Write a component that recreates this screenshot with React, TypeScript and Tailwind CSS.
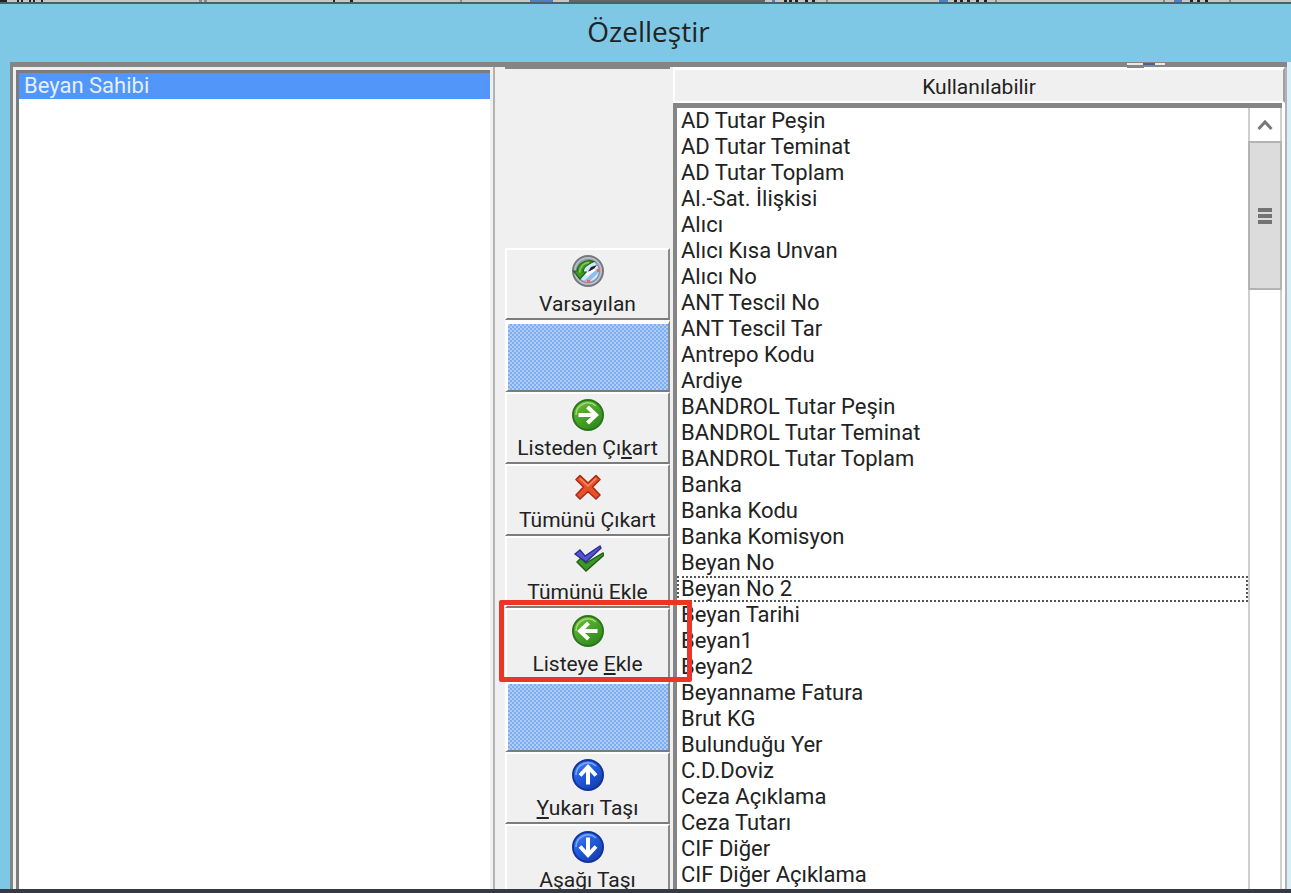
import React, { useState } from 'react'
import clsx from 'clsx'

const availableFields = [
  'AD Tutar Peşin',
  'AD Tutar Teminat',
  'AD Tutar Toplam',
  'Al.-Sat. İlişkisi',
  'Alıcı',
  'Alıcı Kısa Unvan',
  'Alıcı No',
  'ANT Tescil No',
  'ANT Tescil Tar',
  'Antrepo Kodu',
  'Ardiye',
  'BANDROL Tutar Peşin',
  'BANDROL Tutar Teminat',
  'BANDROL Tutar Toplam',
  'Banka',
  'Banka Kodu',
  'Banka Komisyon',
  'Beyan No',
  'Beyan No 2',
  'Beyan Tarihi',
  'Beyan1',
  'Beyan2',
  'Beyanname Fatura',
  'Brut KG',
  'Bulunduğu Yer',
  'C.D.Doviz',
  'Ceza Açıklama',
  'Ceza Tutarı',
  'CIF Diğer',
  'CIF Diğer Açıklama',
]

const ResetIcon = () => (
  <svg width="32" height="32" viewBox="0 0 32 32" aria-hidden="true">
    <circle cx="16" cy="16" r="15" fill="#b9bfce" stroke="#77797e" strokeWidth="2" />
    <circle cx="16" cy="16" r="11.5" fill="#d6e6fa" stroke="#8d93a3" strokeWidth="1.5" />
    <path d="M12 26 26 13l1 4-10 10z" fill="#8dbcf4" />
    <path d="M16 16.500 19 12l6-2-4 5z" fill="#20242c" />
    <path d="M23 14.500 14 20" stroke="#fff" strokeWidth="2.5" />
    <path d="M22 6.500C14 4 6 8 5 16H1.500L8 24l6-7h-3c0-5 5-8 11-10.500z" fill="#3c9a25" stroke="#20670f" strokeWidth="1.2" />
    <path d="M17 7.500c-5 0-9 4-9.500 10" stroke="#79c85b" strokeWidth="1.8" fill="none" />
    <rect x="25" y="14" width="3" height="3" fill="#ee6a50" />
    <rect x="15" y="25" width="3" height="3" fill="#ee6a50" />
  </svg>
)

const arrowTurns = { right: 0, down: 90, left: 180, up: 270 }

const ArrowIcon = ({ direction, color }: { direction: keyof typeof arrowTurns; color: 'green' | 'blue' }) => {
  const green = color === 'green'
  const id = `ball-${color}-${direction}`
  return (
    <svg width="32" height="32" viewBox="0 0 32 32" aria-hidden="true">
      <defs>
        <linearGradient id={id} x1="0" y1="0" x2="0.7" y2="1">
          <stop offset="0" stopColor={green ? '#74c23f' : '#4c86f6'} />
          <stop offset="0.5" stopColor={green ? '#4da52b' : '#245be0'} />
          <stop offset="1" stopColor={green ? '#2f8a1c' : '#143fae'} />
        </linearGradient>
      </defs>
      <circle cx="16" cy="16" r="15" fill={`url(#${id})`} stroke={green ? '#2c741c' : '#12339a'} strokeWidth="2" />
      <path d="M4 16a12 12 0 0 1 20-9" fill="none" stroke={green ? '#9cdc72' : '#7da8ff'} strokeWidth="1.5" />
      <g transform={`rotate(${arrowTurns[direction]} 16 16)`} fill="none" stroke="#fff" strokeWidth="4">
        <path d="M6.500 16H24" />
        <path d="M15.500 8l8.500 8-8.500 8" />
      </g>
    </svg>
  )
}

const CrossIcon = () => (
  <svg width="32" height="32" viewBox="0 0 32 32" aria-hidden="true">
    <path
      d="M8 4.500 16 12l8-7.500 4 4L20.500 16l7.500 8-4 4-8-7.500L8 28l-4-4 7.500-8L4 8.500z"
      fill="#ea4f2b"
      stroke="#a92c14"
      strokeWidth="1.6"
      strokeLinejoin="round"
    />
    <path d="M8 7.500l8 7.500 8-7.500" fill="none" stroke="#f58c68" strokeWidth="1.6" />
  </svg>
)

const ChecksIcon = () => (
  <svg width="32" height="32" viewBox="0 0 32 32" aria-hidden="true">
    <path d="M5 19l4-4 5 5L31 10l1 2-18 16z" fill="#3d962a" stroke="#1f5f14" strokeWidth="1.4" />
    <path d="M3 11l5-4 5 6L28 3l1 2-15 14z" fill="#5557cf" stroke="#2b2c94" strokeWidth="1.4" />
  </svg>
)

const DitheredSlot = () => (
  <div className="h-[72px] shrink-0 border-2 border-t-4 border-l-3 border-white border-r-[#8a8a8a] border-b-[#7c7c7c]">
    <div className="h-full bg-[repeating-conic-gradient(#78aefa_0_25%,#b3ccec_0_50%)] bg-[length:4px_4px]" />
  </div>
)

type ToolButtonProps = {
  icon: React.ReactNode
  highlighted?: boolean
  children: React.ReactNode
}

const ToolButton = ({ icon, highlighted, children }: ToolButtonProps) => (
  <button
    type="button"
    className="relative flex h-[72px] w-full shrink-0 flex-col items-center gap-1 border-2 border-white border-r-[#8a8a8a] border-b-[#7c7c7c] bg-[#f0f0f0] pt-[5px] text-[21px] leading-[26px] whitespace-nowrap"
  >
    {icon}
    <span>{children}</span>
    {highlighted && (
      <span className="pointer-events-none absolute -top-2.5 -right-6 -bottom-1 -left-2 z-10 rounded-xs border-5 border-[#ee3424]" />
    )}
  </button>
)

const Key = ({ children }: { children: React.ReactNode }) => (
  <span className="underline decoration-2 underline-offset-2">{children}</span>
)

const BackdropStrip = () => (
  <div className="h-1 shrink-0 border-b-2 border-[#4c6069] bg-[#c9c7c6]">
    <svg className="block h-0.5 w-full" aria-hidden="true">
      <path d="M0 1h7M17 1h2M21 1h2M29 1h2M33 1h2M41 1h2M333 1h2M350 1h3M784 1h3M789 1h3M795 1h3M805 1h3M812 1h3M954 1h3M960 1h3M967 1h3M976 1h3M984 1h3M1190 1h3M1197 1h3M1205 1h3" stroke="#222" strokeWidth="2" />
      <path d="M199 1h3M204 1h3M460 1h2M826 1h2M995 1h2M1163 1h2M1229 1h2" stroke="#888" strokeWidth="2" />
      <path d="M530 1h23M772 1h3M939 1h9M1174 1h8" stroke="#4c7fc4" strokeWidth="2" />
      <path d="M569 1h196" stroke="#666" strokeWidth="2" />
    </svg>
  </div>
)

const SelectedList = () => (
  <section className="flex grow-[474] basis-0 border-r-2 border-l-3 border-r-[#b2b2b2] border-l-[#858585] bg-[#f0f0f0] pt-[3px] pr-[3px] pl-[3px]">
    <ul
      role="listbox"
      aria-label="Beyan Sahibi"
      className="grow border-t-3 border-l-3 border-[#7c7c7c] bg-white text-[22px] leading-[26px]"
    >
      <li role="option" aria-selected="true" className="bg-[#5196f8] pl-[5px] text-[#e4efff]">
        Beyan Sahibi
      </li>
    </ul>
  </section>
)

const ScrollBar = () => (
  <div className="flex w-[34px] shrink-0 flex-col border-x-2 border-[#cfcfcf] bg-white">
    <button type="button" aria-label="Yukarı kaydır" className="flex h-[33px] items-center justify-center">
      <svg width="16" height="12" viewBox="0 0 16 12" aria-hidden="true">
        <path d="M1.500 10 8 3l6.500 7" fill="none" stroke="#777" strokeWidth="3" />
      </svg>
    </button>
    <div className="-mx-0.5 flex h-[149px] flex-col items-center justify-center gap-0.5 border-2 border-[#b3b3b3] bg-[#dcdcdc]">
      <span className="h-1 w-3.5 bg-[#737373]" />
      <span className="h-1 w-3.5 bg-[#737373]" />
      <span className="h-1 w-3.5 bg-[#737373]" />
    </div>
  </div>
)

const AvailableList = () => {
  const [focused, setFocused] = useState('Beyan No 2')

  return (
    <section className="flex min-h-0 grow-[612] basis-0 flex-col border-r-2 border-[#b2b2b2] bg-white">
      <h2 className="h-[36px] shrink-0 border-2 border-t-3 border-white border-r-[#a0a0a0] bg-[#f0f0f0] text-center text-[21px] leading-[34px]">
        Kullanılabilir
      </h2>
      <div className="mr-[3px] flex min-h-0 grow border-t-5 border-l-4 border-[#858585]">
        <ul role="listbox" aria-label="Kullanılabilir" className="min-w-0 grow overflow-hidden text-[22px] leading-[26px]">
          {availableFields.map((field) => (
            <li
              key={field}
              role="option"
              aria-selected={field === focused}
              onClick={() => setFocused(field)}
              className={clsx(
                'h-[26px] pl-1 whitespace-nowrap',
                field === focused && 'outline-2 -outline-offset-2 outline-dotted outline-[#555]'
              )}
            >
              {field}
            </li>
          ))}
        </ul>
        <ScrollBar />
      </div>
    </section>
  )
}

const App = () => {
  return (
    <div className="flex h-screen flex-col overflow-hidden bg-[#7ec8e5] font-['Roboto','Liberation_Sans',sans-serif] text-[#222]">
      <BackdropStrip />
      <header className="flex h-[58px] shrink-0 items-center justify-center pb-1 pl-1.5">
        <h1 className="font-['Open_Sans','Noto_Sans',sans-serif] text-[28px] leading-9">Özelleştir</h1>
      </header>

      <main className="flex min-h-0 grow pl-2.5">
        <div className="relative flex min-h-0 grow border-t-5 border-[#858585]">
          <SelectedList />

          <div className="flex w-[178px] shrink-0 flex-col bg-[#f0f0f0] pr-[3px] pl-2.5">
            <div className="h-[181px] shrink-0 border-t-2 border-[#858585]" />
            <ToolButton icon={<ResetIcon />}>Varsayılan</ToolButton>
            <DitheredSlot />
            <ToolButton icon={<ArrowIcon direction="right" color="green" />}>
              Listeden Çı<Key>k</Key>art
            </ToolButton>
            <ToolButton icon={<CrossIcon />}>Tümünü Çıkart</ToolButton>
            <ToolButton icon={<ChecksIcon />}>Tümünü Ekle</ToolButton>
            <ToolButton icon={<ArrowIcon direction="left" color="green" />} highlighted>
              Listeye <Key>E</Key>kle
            </ToolButton>
            <DitheredSlot />
            <ToolButton icon={<ArrowIcon direction="up" color="blue" />}>
              <Key>Y</Key>ukarı Taşı
            </ToolButton>
            <ToolButton icon={<ArrowIcon direction="down" color="blue" />}>Aşağı Taşı</ToolButton>
          </div>

          <AvailableList />

          <svg className="absolute -top-1 right-[122px]" width="38" height="6" aria-hidden="true">
            <path d="M0 1h38" stroke="#e9e9ea" strokeWidth="2" />
            <path d="M16 1h12" stroke="#44639a" strokeWidth="2" />
            <path d="M0 4h17" stroke="#858585" strokeWidth="2" />
          </svg>
        </div>
        <div className="w-1 bg-[#d8eefa]" />
      </main>

      <footer className="relative z-20 h-1 shrink-0 bg-[#353943]" />
    </div>
  )
}

export default App
